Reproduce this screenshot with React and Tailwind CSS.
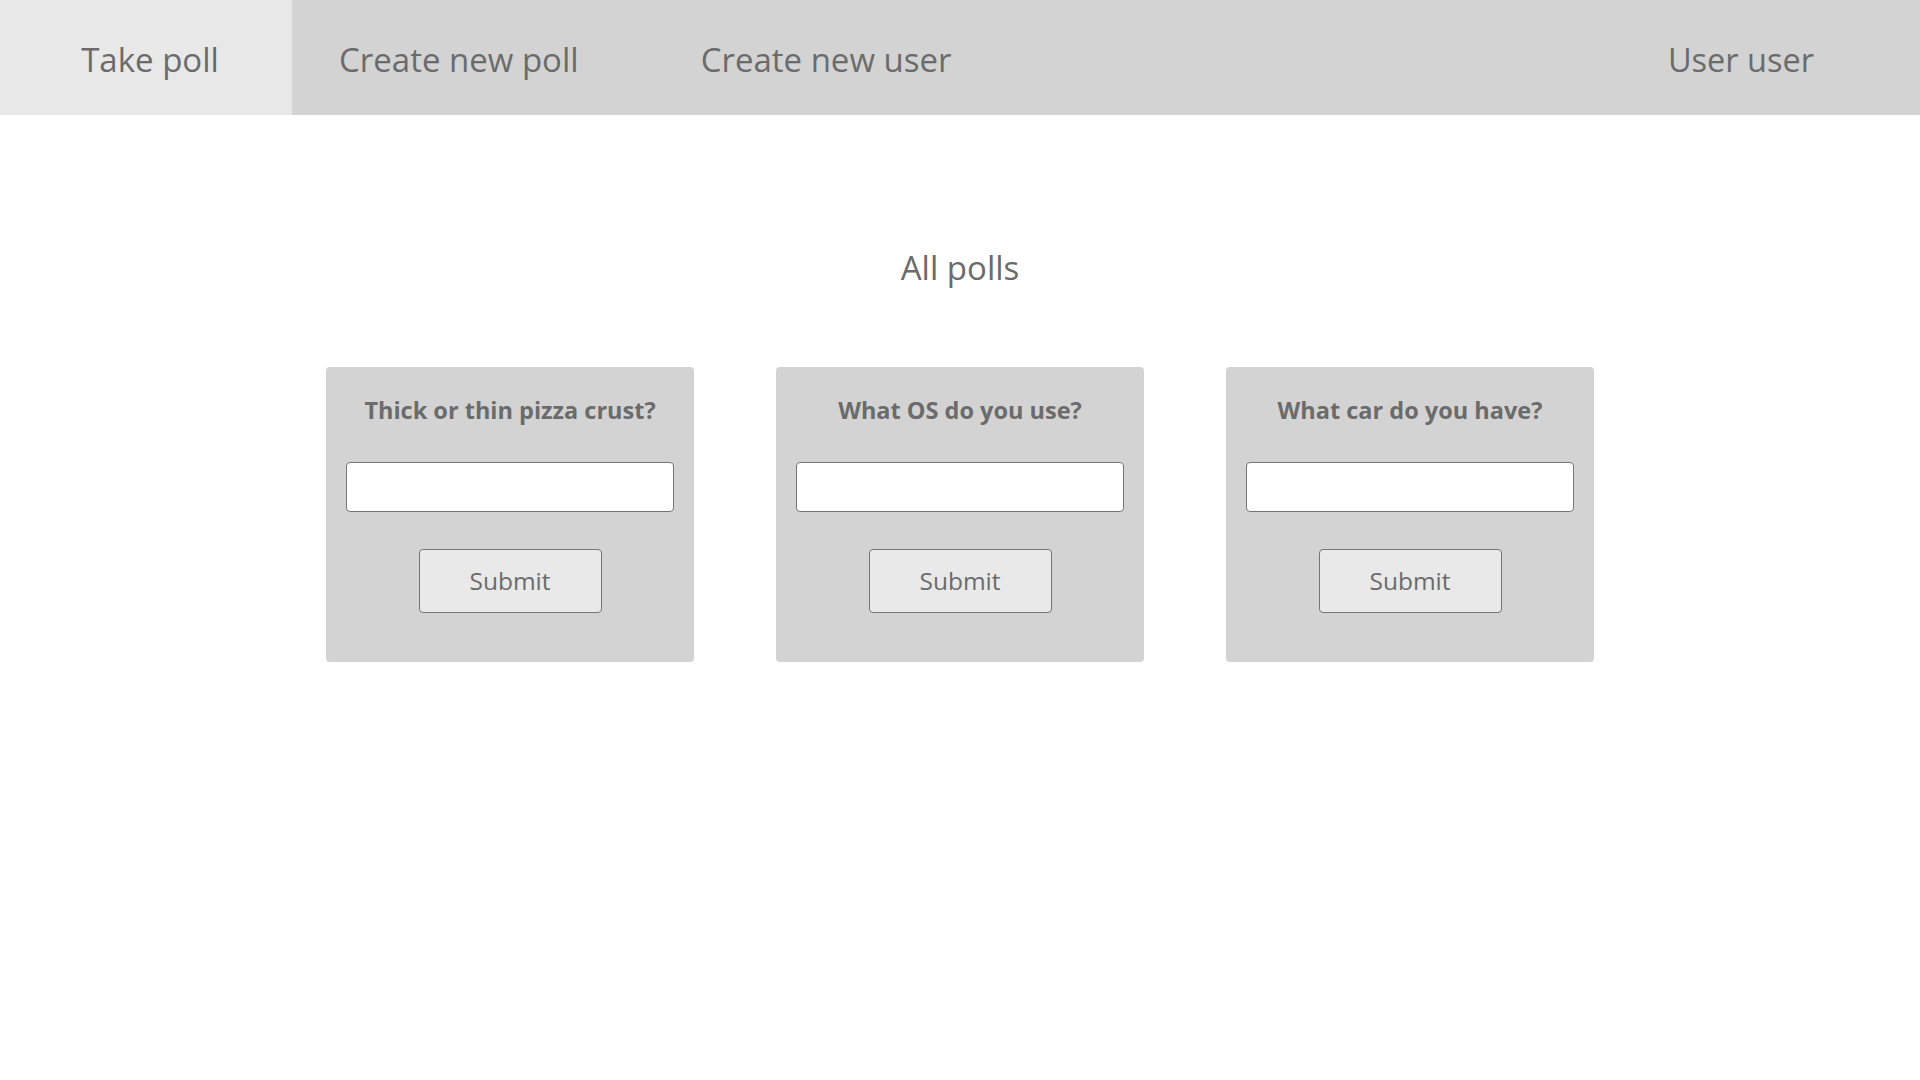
import React from "react";

const polls = [
  { id: 1, question: "Thick or thin pizza crust?" },
  { id: 2, question: "What OS do you use?" },
  { id: 3, question: "What car do you have?" },
];

const PollCard = ({ poll }) => (
  <div className="w-[368px] h-[295px] bg-[#d3d3d3] rounded-[4px] px-[20px] pt-[22px] flex flex-col items-center">
    <h3 className="text-[23.5px] font-bold leading-[42px] text-[#6b6b6b]">{poll.question}</h3>
    <input
      type="text"
      className="mt-[31px] w-full h-[50px] bg-white border border-[#767676] rounded-[4px] px-2 text-[20px] outline-none"
    />
    <button className="mt-[37px] w-[183px] h-[64px] bg-[#e9e9e9] border border-[#767676] rounded-[4px] text-[24.5px] text-[#6b6b6b]">
      Submit
    </button>
  </div>
);

export default function App() {
  return (
    <div
      className="min-h-screen bg-white text-[#6b6b6b]"
      style={{ fontFamily: '"Open Sans", "Noto Sans", sans-serif' }}
    >
      <nav className="h-[115px] bg-[#d3d3d3] flex items-stretch text-[33px] pt-[5px]">
        <a className="w-[292px] -mt-[5px] bg-[#e8e8e8] flex items-center justify-center pl-[8px] pt-[5px]">Take poll</a>
        <div className="flex items-center gap-[122px] pl-[47px]">
          <a>Create new poll</a>
          <a>Create new user</a>
        </div>
        <a className="ml-auto flex items-center pr-[106px] text-[32.5px]">User user</a>
      </nav>

      <main className="flex flex-col items-center">
        <h1 className="mt-[136px] text-[33px] leading-none">All polls</h1>
        <div className="mt-[83px] flex gap-[82px]">
          {polls.map((p) => (
            <PollCard key={p.id} poll={p} />
          ))}
        </div>
      </main>
    </div>
  );
}
